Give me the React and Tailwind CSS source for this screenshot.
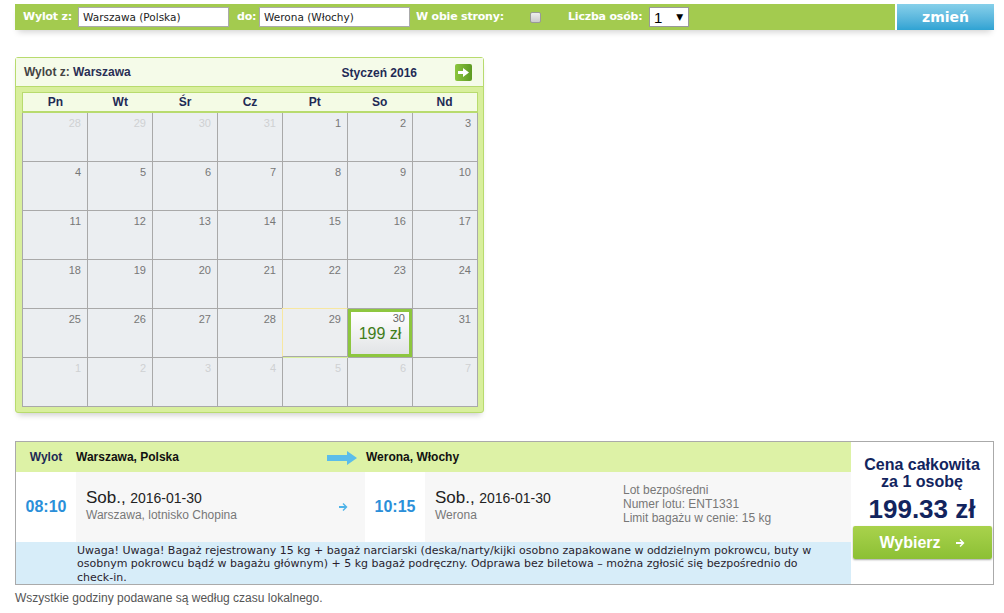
import React from "react";

const arial = { fontFamily: '"Liberation Sans", Arial, sans-serif' };
const verdana = { fontFamily: '"DejaVu Sans", Verdana, sans-serif' };

const days = ["Pn", "Wt", "Śr", "Cz", "Pt", "So", "Nd"];

// kalendarz: 6 tygodni, poprzedni/nastepny miesiac szarym
const weeks = [
  [[28, 0], [29, 0], [30, 0], [31, 0], [1, 1], [2, 1], [3, 1]],
  [[4, 1], [5, 1], [6, 1], [7, 1], [8, 1], [9, 1], [10, 1]],
  [[11, 1], [12, 1], [13, 1], [14, 1], [15, 1], [16, 1], [17, 1]],
  [[18, 1], [19, 1], [20, 1], [21, 1], [22, 1], [23, 1], [24, 1]],
  [[25, 1], [26, 1], [27, 1], [28, 1], [29, 1], [30, 1], [31, 1]],
  [[1, 0], [2, 0], [3, 0], [4, 0], [5, 0], [6, 0], [7, 0]],
];

const SmallArrow = ({ color = "#4fb3e8" }) => (
  <svg width="9" height="8" viewBox="0 0 9 8">
    <path d="M0 3h5.5L3.5 1 4.5 0 8.5 4 4.5 8 3.5 7 5.5 5H0z" fill={color} />
  </svg>
);

const DayCell = ({ day, current, selected, hover }) => {
  if (selected) {
    return (
      <div className="h-[49px] border-r border-b border-[#a9a9a9] bg-[#ebeef1]">
        <div className="h-full border-[3px] border-[#8dc63f] bg-gradient-to-b from-white to-[#e2e4e6] flex flex-col items-center">
          <div className="self-end pr-[4px] text-[11px] leading-[13px] text-[#666]">{day}</div>
          <div className="text-[16px] leading-[18px] text-[#3f7d1a]">199 zł</div>
        </div>
      </div>
    );
  }
  return (
    <div
      className={`h-[49px] border-r border-b border-[#a9a9a9] bg-[#ebeef1] text-right pr-[6px] pt-[4px] text-[11px] leading-[13px] ${
        current ? "text-[#777]" : "text-[#cfd1d3]"
      } ${hover ? "border-t border-l border-t-[#f7e7a1] border-l-[#f7e7a1] -mt-px -ml-px bg-[#eceef0]" : ""}`}
    >
      {day}
    </div>
  );
};

const App = () => {
  return (
    <div className="w-[1004px] h-[613px] bg-white overflow-hidden pt-[4px] pl-[15px]" style={arial}>
      {/* pasek wyszukiwania */}
      <div className="w-[979px] h-[26px] flex shadow-[0_5px_6px_-3px_rgba(0,0,0,0.18)]" style={verdana}>
        <div className="flex-1 bg-[#a3cb4f] flex items-center text-white font-bold text-[11px] tracking-[-0.2px] whitespace-nowrap">
          <span className="ml-[8px] w-[55px]">Wylot z:</span>
          <div className="w-[151px] h-[20px] bg-white border border-[#aaa] text-[#222] font-normal text-[10.5px] tracking-normal leading-[18px] pl-[4px]">
            Warszawa (Polska)
          </div>
          <span className="ml-[8px] w-[22px]">do:</span>
          <div className="w-[151px] h-[20px] bg-white border border-[#aaa] text-[#222] font-normal text-[10.5px] tracking-normal leading-[18px] pl-[4px]">
            Werona (Włochy)
          </div>
          <span className="ml-[6px] w-[114px]">W obie strony:</span>
          <span className="w-[11px] h-[11px] rounded-[2px] bg-gradient-to-b from-[#eee] to-[#ccc] border border-[#999]" />
          <span className="ml-[27px] w-[81px]">Liczba osób:</span>
          <div className="w-[40px] h-[20px] bg-white border border-[#999] flex items-center justify-between pl-[4px] pr-[5px]">
            <span className="text-[15px] font-normal text-[#000] leading-none" style={arial}>1</span>
            <span className="text-[9px] text-black leading-none">▼</span>
          </div>
        </div>
        <div className="w-[97px] ml-[2px] bg-gradient-to-b from-[#86d0ea] to-[#2ea3d3] flex items-center justify-center text-white font-bold text-[14px]">
          zmień
        </div>
      </div>

      {/* kalendarz */}
      <div className="mt-[27px] w-[469px] h-[356px] border border-[#b8db6e] rounded-[3px] bg-[#d8ef9c] shadow-[0_5px_6px_-3px_rgba(0,0,0,0.2)] flex flex-col">
        <div className="h-[29px] bg-[#f5fbe9] border-b border-[#b8db6e] flex items-center pl-[8px] pr-[11px] text-[12px] font-bold">
          <span className="text-[#444]">Wylot z:&nbsp;</span>
          <span className="text-[#2a2f55]">Warszawa</span>
          <span className="ml-auto mt-[2px] text-[#1f2a55]">Styczeń 2016</span>
          <span className="ml-[38px] w-[17px] h-[17px] rounded-[2px] bg-gradient-to-r from-[#8cc63e] to-[#5d9a22] flex items-center justify-center">
            <svg width="11" height="9" viewBox="0 0 11 9">
              <path d="M0 3h5V0l6 4.5L5 9V6H0z" fill="#fff" />
            </svg>
          </span>
        </div>
        <div className="pl-[6px] pt-[5px]">
          <div className="w-[456px] h-[21px] bg-[#f4fbe5] border-t border-b-2 border-x border-[#b8db6e] grid grid-cols-7 text-[12px] font-bold text-[#1f2a55]">
            {days.map((d) => (
              <div key={d} className="flex items-center justify-center pb-px">{d}</div>
            ))}
          </div>
          <div className="w-[456px] grid grid-cols-7 border-l border-[#a9a9a9]">
            {weeks.map((w, wi) =>
              w.map(([d, cur], di) => (
                <DayCell
                  key={`${wi}-${di}`}
                  day={d}
                  current={cur === 1}
                  selected={wi === 4 && di === 5}
                  hover={wi === 4 && di === 4}
                />
              ))
            )}
          </div>
        </div>
      </div>

      {/* wynik lotu */}
      <div className="mt-[28px] w-[979px] h-[144px] border border-[#aaa] flex">
        <div className="w-[835px] flex flex-col">
          <div className="h-[30px] bg-[#ddf2a6] flex items-center text-[12px] font-bold">
            <span className="w-[60px] text-center text-[#1f2a55]">Wylot</span>
            <span className="text-[#111]">Warszawa, Polska</span>
            <span className="ml-[148px] mt-[2px]">
              <svg width="30" height="14" viewBox="0 0 30 14">
                <path d="M0 4h20V0l10 7-10 7v-4H0z" fill="#5bbdea" />
              </svg>
            </span>
            <span className="ml-[9px] text-[#111]">Werona, Włochy</span>
          </div>
          <div className="h-[70px] flex">
            <div className="w-[60px] bg-white flex items-center justify-center text-[16px] font-bold text-[#2b8fd9]">08:10</div>
            <div className="w-[289px] bg-[#f7f7f7] flex items-center pl-[10px] pr-[17px]">
              <div className="flex-1 -mt-[3px]">
                <div className="text-[#222] leading-[19px]">
                  <span className="text-[17px]">Sob.,</span> <span className="text-[14px]">2016-01-30</span>
                </div>
                <div className="text-[12px] text-[#777] leading-[14px]">Warszawa, lotnisko Chopina</div>
              </div>
              <SmallArrow />
            </div>
            <div className="w-[60px] bg-white flex items-center justify-center text-[16px] font-bold text-[#2b8fd9]">10:15</div>
            <div className="flex-1 bg-[#f7f7f7] flex items-center pl-[10px]">
              <div className="w-[188px] -mt-[3px]">
                <div className="text-[#222] leading-[19px]">
                  <span className="text-[17px]">Sob.,</span> <span className="text-[14px]">2016-01-30</span>
                </div>
                <div className="text-[12px] text-[#777] leading-[14px]">Werona</div>
              </div>
              <div className="text-[12px] text-[#777] leading-[14px] -mt-[6px]">
                <div>Lot bezpośredni</div>
                <div>Numer lotu: ENT1331</div>
                <div>Limit bagażu w cenie: 15 kg</div>
              </div>
            </div>
          </div>
          <div className="flex-1 bg-[#d7edf9] pl-[61px] pt-[2px] text-[11px] leading-[13.5px] text-[#2a1e2e] whitespace-nowrap" style={verdana}>
            Uwaga! Uwaga! Bagaż rejestrowany 15 kg + bagaż narciarski (deska/narty/kijki osobno zapakowane w oddzielnym pokrowcu, buty w
            <br />
            osobnym pokrowcu bądź w bagażu głównym) + 5 kg bagaż podręczny. Odprawa bez biletowa – można zgłosić się bezpośrednio do
            <br />
            check-in.
          </div>
        </div>
        <div className="flex-1 flex flex-col items-center pt-[14px]">
          <div className="text-[16px] font-bold text-[#12245e] leading-[17px] text-center">
            Cena całkowita
            <br />
            za 1 osobę
          </div>
          <div className="mt-[5px] text-[26px] font-bold text-[#12245e] leading-[28px]">199.33 zł</div>
          <div className="mt-[3px] w-[139px] h-[33px] rounded-[2px] bg-gradient-to-b from-[#a9d24c] to-[#8cc034] shadow-[0_1px_2px_rgba(0,0,0,0.35)] flex items-center justify-center text-white font-bold text-[16px]">
            <span>Wybierz</span>
            <span className="ml-[15px] mt-[1px]">
              <SmallArrow color="#fff" />
            </span>
          </div>
        </div>
      </div>

      <div className="mt-[4px] text-[12px] text-[#555]">Wszystkie godziny podawane są według czasu lokalnego.</div>
    </div>
  );
};

export default App;
